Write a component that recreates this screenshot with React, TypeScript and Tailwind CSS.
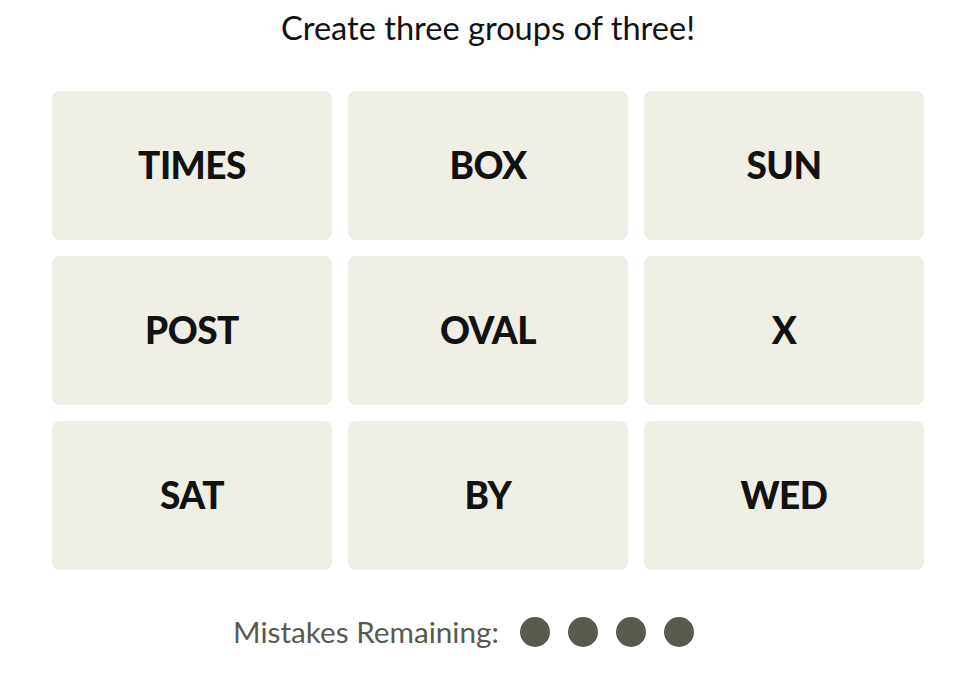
import React from "react";

const words = ["TIMES", "BOX", "SUN", "POST", "OVAL", "X", "SAT", "BY", "WED"];

export default function App() {
  return (
    <div className="w-[968px] h-[675px] bg-white overflow-hidden" style={{ fontFamily: "Lato, 'Liberation Sans', sans-serif" }}>
      <div className="w-[976px] flex flex-col items-center">
        <h1 className="mt-[8px] text-[32.6px] leading-[40px] font-normal text-[#121212]">Create three groups of three!</h1>
        <div className="mt-[43px] grid grid-cols-3 gap-4 w-[872px]">
          {words.map((w) => (
            <div key={w} className="h-[149px] rounded-lg bg-[#efefe6] flex items-center justify-center">
              <span className="text-[37px] font-black text-[#121212] tracking-[-0.5px] translate-y-[-1px]">{w}</span>
            </div>
          ))}
        </div>
        <div className="mt-[40px] flex items-center mr-[49px]">
          <span className="text-[29.7px] text-[#5a594e]">Mistakes Remaining:</span>
          <div className="ml-[21px] flex gap-[18px]">
            {[0, 1, 2, 3].map((i) => (
              <span key={i} className="block w-[30px] h-[30px] rounded-full bg-[#5a594e]" />
            ))}
          </div>
        </div>
      </div>
    </div>
  );
}
